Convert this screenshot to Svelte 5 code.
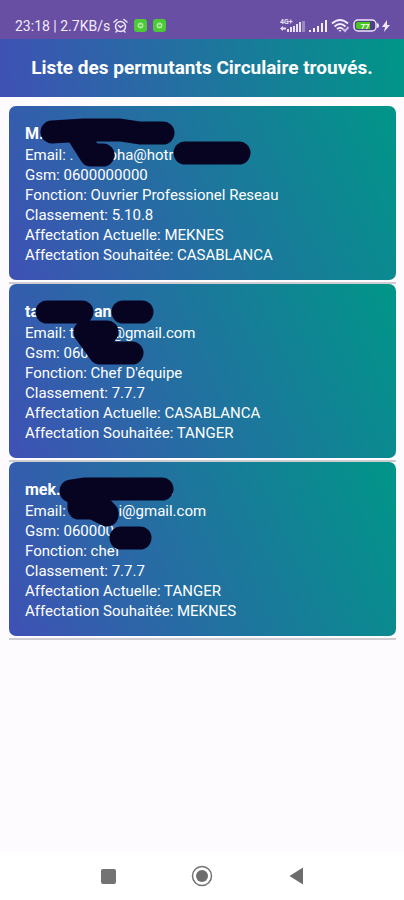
<script lang="ts">
  // A line is a list of parts: text, or the width in px of a blank run.
  type Part = string | number;

  interface Permutant {
    name: Part[];
    email: Part[];
    gsm: string;
    fonction: string;
    classement: string;
    actuelle: string;
    souhaitee: string;
    marks: string[];
  }

  const permutants: Permutant[] = [
    {
      name: ["M."],
      email: [".", 35, "pha@hotr"],
      gsm: "0600000000",
      fonction: "Ouvrier Professionel Reseau",
      classement: "5.10.8",
      actuelle: "MEKNES",
      souhaitee: "CASABLANCA",
      marks: ["M43 26 L75 24 L111 24 L131 27 H154", "M70 30 L82 49 H94", "M176 47 H230"],
    },
    {
      name: ["ta", 55, "an"],
      email: ["t", 37, "@gmail.com"],
      gsm: "0600",
      fonction: "Chef D'équipe",
      classement: "7.7.7",
      actuelle: "CASABLANCA",
      souhaitee: "TANGER",
      marks: ["M38 28 H73", "M114 28 H133", "M98 48 H76 L91 69 H123"],
    },
    {
      name: ["mek.", 108, "."],
      email: [".", 45, "i@gmail.com"],
      gsm: "060000",
      fonction: "chef",
      classement: "7.7.7",
      actuelle: "TANGER",
      souhaitee: "MEKNES",
      marks: ["M62 29 L75 27 H153", "M70 38 V46 L84 46 L98 53", "M84 36 L98 51", "M112 76 H131"],
    },
  ];
</script>

{#snippet parts(items: Part[])}
  {#each items as item}{#if typeof item === "number"}<span class="blank" style="width: {item}px"></span>{:else}{item}{/if}{/each}
{/snippet}

<div class="screen">
  <div class="status">
    <div class="status-left">
      <span>23:18 | 2.7KB/s</span>
      <svg width="15" height="16" viewBox="0 0 15 16" fill="none" stroke="#eee6fa" stroke-width="1.5" stroke-linecap="round">
        <circle cx="7.5" cy="8.5" r="5" />
        <path d="M1 4 L4 1.5 M14 4 L11 1.5 M5.5 7.5 L7.5 9.5 L10 7.5 M4 13 L3 14 M11 13 L12 14" />
      </svg>
      {#each [0, 1] as n (n)}
        <svg class="app" width="13" height="13" viewBox="0 0 13 13">
          <rect width="13" height="13" rx="3" fill="#4cc936" />
          <circle cx="6.5" cy="6.5" r="2.5" fill="#8de07c" stroke="#c3f0b9" />
          <path d="M5 6.5 H8" stroke="#4cc936" />
        </svg>
      {/each}
    </div>
    <div class="status-right">
      <svg width="26" height="15" viewBox="0 0 26 15" fill="#e9e0f6">
        <text x="0" y="6" font-size="7" font-weight="700">4G+</text>
        <path d="M0 10.5 L3 8 V9.500 H6 V11.5 H3 V13z M7 11h2v3h-2z M10 9h2v5h-2z M13 8h2v6h-2z M16 6h2v8h-2z M19 4h2v10h-2z" />
        <path d="M22 3h3v11h-3z" opacity="0.4" />
      </svg>
      <svg width="19" height="15" viewBox="0 0 19 15" fill="#f2ebfc">
        <path d="M0 12h2v2h-2z M4 10h2v4h-2z M8 8h2v6h-2z M12 5h2v9h-2z M16 2h2v12h-2z" />
      </svg>
      <svg width="19" height="15" viewBox="0 0 19 15" fill="none" stroke="#f2ebfc" stroke-width="2">
        <path d="M1 5.5 Q9 -1.5 17 5.5 M3.5 8.5 Q9 3.5 14.5 8.5 M6 11 Q9 8.5 12 11" />
        <path d="M7.5 12 L9 14 L10.5 12z" fill="#f2ebfc" stroke="none" />
        <path d="M12 11 L14 13 L17.5 9" stroke="#c9b8e4" />
      </svg>
      <svg width="26" height="14" viewBox="0 0 26 14">
        <rect x="1" y="1" width="22" height="11" rx="4" fill="#4d4184" stroke="#eee6fa" stroke-width="1.5" />
        <path d="M5 3 H17 V10 H5 Q3 10 3 8 V5 Q3 3 5 3z" fill="#49c81e" />
        <path d="M24 4 Q26 4 26 6.5 Q26 9 24 9z" fill="#eee6fa" />
        <text x="12" y="10" font-size="8" font-weight="700" text-anchor="middle" fill="#fff">77</text>
      </svg>
      <svg width="8" height="12" viewBox="0 0 8 12" fill="#eee6fa"><path d="M5 0 L0 7 H3 L2 12 L8 5 H5z" /></svg>
    </div>
  </div>

  <header>
    <h1>Liste des permutants Circulaire trouvés.</h1>
  </header>

  <main>
    {#each permutants as p}
      <article>
        <div class="card">
          <h2>{@render parts(p.name)}</h2>
          <p>Email: {@render parts(p.email)}</p>
          <p>Gsm: {p.gsm}</p>
          <p>Fonction: {p.fonction}</p>
          <p>Classement: {p.classement}</p>
          <p>Affectation Actuelle: {p.actuelle}</p>
          <p>Affectation Souhaitée: {p.souhaitee}</p>
          <svg class="marks" width="260" height="100" viewBox="0 0 260 100" aria-hidden="true">
            {#each p.marks as d}
              <path {d} />
            {/each}
          </svg>
        </div>
      </article>
    {/each}
  </main>

  <nav>
    <button aria-label="Applications récentes">
      <svg width="20" height="20" viewBox="0 0 20 20"><rect x="3" y="3" width="15" height="15" rx="2" fill="#737373" /></svg>
    </button>
    <button aria-label="Accueil">
      <svg width="22" height="22" viewBox="0 0 22 22">
        <circle cx="11" cy="11" r="9.5" fill="none" stroke="#737373" stroke-width="1.5" />
        <circle cx="11" cy="11" r="6" fill="#6d6d6d" />
      </svg>
    </button>
    <button aria-label="Retour">
      <svg width="20" height="20" viewBox="0 0 20 20"><path d="M17 1.5 V18.5 L3.5 10z" fill="#6d6d6d" /></svg>
    </button>
  </nav>
</div>

<style>
  :global(body) { margin: 0; background: #fefbff; }
  .screen {
    display: flex; flex-direction: column; min-height: 100vh;
    font-family: Roboto, "Liberation Sans", sans-serif; color: #fff;
  }
  .status {
    display: flex; justify-content: space-between; align-items: center;
    height: 27px; padding: 12px 14px 0 15px; background: #684fa3;
    font-size: 14px; color: #f2ebfc;
  }
  .status-left, .status-right { display: flex; align-items: center; gap: 3px; }
  .status-left .app { margin-left: 3px; }
  header { padding: 16px; background: linear-gradient(82deg, #3f51b5, #009688); text-align: center; }
  h1 { margin: 0; font-size: 19px; line-height: 26px; font-weight: 700; }
  main { flex: 1; padding: 9px 8px 0 9px; }
  article { padding-bottom: 2px; border-bottom: 2px solid #d0cdd2; }
  .card {
    position: relative; padding: 17px 16px 15px; border-radius: 7px;
    background: linear-gradient(66deg, #3f51b5, #009688);
  }
  h2 { margin: 0; font-size: 16px; line-height: 22px; font-weight: 700; }
  p { margin: 0; font-size: 15px; line-height: 20px; }
  .blank { display: inline-block; }
  .marks { position: absolute; left: 0; top: 0; fill: none; stroke: #060421; stroke-width: 23; stroke-linecap: round; stroke-linejoin: round; }
  nav { display: grid; grid-template-columns: repeat(3, 1fr); padding: 0 15%; background: #fff; }
  nav button { display: flex; align-items: center; justify-content: center; height: 48px; padding: 0; border: 0; background: none; cursor: pointer; }
</style>
